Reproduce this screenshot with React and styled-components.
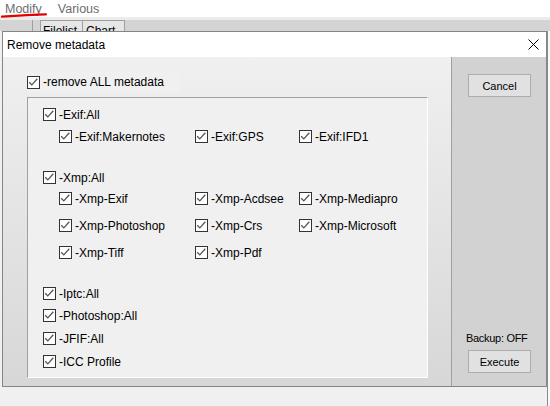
import React from "react";
import styled, { createGlobalStyle } from "styled-components";

const Global = createGlobalStyle`
  html, body { margin: 0; padding: 0; background: #ffffff; }
  body { font-family: "Liberation Sans", Arial, sans-serif; overflow: hidden; }
  * { box-sizing: border-box; }
`;

const Screen = styled.div`
  position: relative;
  width: 550px;
  height: 406px;
  overflow: hidden;
  display: flex;
  flex-direction: column;
  background: #ffffff;
`;

const MenuBar = styled.div`
  height: 17px;
  display: flex;
  align-items: flex-start;
  gap: 16px;
  padding: 2px 0 0 5px;
  background: #ffffff;
`;

const MenuItem = styled.span`
  position: relative;
  font-size: 12.5px;
  line-height: 15px;
  color: #6d6d6d;
`;

const Scribble = styled.svg`
  position: absolute;
  left: -4px;
  top: 10px;
  width: 46px;
  height: 7px;
  overflow: visible;
`;

const Toolbar = styled.div`
  height: 14px;
  display: flex;
  align-items: flex-start;
  padding-top: 3px;
  background: linear-gradient(#ececec 0 3px, #d4d4d4 3px);
`;

const ToolbarDivider = styled.div`
  width: 1px;
  height: 20px;
  margin-left: 32px;
  background: #a0a0a0;
`;

const TabStrip = styled.div`
  display: flex;
  margin-left: 7px;
`;

const Tab = styled.div`
  width: ${(p) => p.$w}px;
  height: 20px;
  padding: 3px 0 0 ${(p) => p.$pl}px;
  margin-left: ${(p) => (p.$first ? 0 : -1)}px;
  border: 1px solid #a0a0a0;
  border-bottom: none;
  background: #e6e6e6;
  font-size: 12px;
  line-height: 14px;
  color: #000;
`;

const Workspace = styled.div`
  flex: 1;
  display: flex;
  background: #fafafa;
`;

const WorkspacePane = styled.div`
  width: 548px;
  background: #f0f0f0;
  border-right: 1px solid #8a8a8a;
`;

const Dialog = styled.div`
  position: absolute;
  left: 2px;
  top: 31px;
  width: 545px;
  height: 356px;
  border: 1px solid #858585;
  display: flex;
  flex-direction: column;
  background: #ffffff;
`;

const TitleBar = styled.div`
  height: 25px;
  flex: none;
  display: flex;
  align-items: center;
  padding-left: 4px;
  background: #ffffff;
`;

const Title = styled.span`
  flex: 1;
  font-size: 12px;
  color: #000;
`;

const CloseButton = styled.div`
  width: 26px;
  height: 25px;
  display: flex;
  align-items: center;
  justify-content: center;
`;

const Body = styled.div`
  flex: 1;
  display: flex;
  min-height: 0;
`;

const MainArea = styled.div`
  flex: 1;
  display: flex;
  flex-direction: column;
  padding: 15px 23px 8px 24px;
  background: linear-gradient(#f0f0f0, #d7d7d7);
`;

const AllRow = styled.div`
  width: 153px;
  padding-top: 1px;
  background: #f0f0f0;
`;

const Group = styled.div`
  flex: 1;
  margin-top: 5px;
  padding: 8px 0 0 15px;
  background: #f0f0f0;
  border-top: 1px solid #a0a0a0;
  border-left: 1px solid #a0a0a0;
  border-right: 1px solid #ffffff;
  border-bottom: 1px solid #ffffff;
  display: flex;
  flex-direction: column;
  align-items: flex-start;
`;

const ItemWrap = styled.label`
  display: inline-flex;
  align-items: center;
  gap: 3px;
  height: 18px;
  margin-top: ${(p) => p.$mt || 0}px;
  font-size: 12px;
  color: #000;
  white-space: nowrap;
`;

const Box = styled.span`
  width: 13px;
  height: 13px;
  flex: none;
  border: 1px solid #333333;
  background: #ffffff;
  display: flex;
`;

const SubGrid = styled.div`
  display: grid;
  grid-template-columns: 136px 104px auto;
  row-gap: ${(p) => p.$rowGap || 0}px;
  margin-left: 16px;
  margin-top: ${(p) => p.$mt || 0}px;
`;

const SidePanel = styled.div`
  width: 95px;
  flex: none;
  display: flex;
  flex-direction: column;
  align-items: flex-start;
  padding: 17px 0 13px 16px;
  border-left: 1px solid #a0a0a0;
  background: #d2d2d2;
`;

const Button = styled.div`
  width: 63px;
  height: 23px;
  display: flex;
  align-items: center;
  justify-content: center;
  border: 1px solid #adadad;
  background: #e1e1e1;
  font-size: 11px;
  color: #000;
  margin-top: ${(p) => p.$mt || 0}px;
`;

const Spacer = styled.div`
  flex: 1;
`;

const BackupLabel = styled.div`
  margin-left: -2px;
  font-size: 11px;
  line-height: 14px;
  letter-spacing: -0.3px;
  color: #000;
`;

function Check({ children, mt }) {
  return (
    <ItemWrap $mt={mt}>
      <Box>
        <svg width="11" height="11" viewBox="0 0 11 11">
          <path d="M1.2 5.2 L3.8 7.9 L9.3 1.8" fill="none" stroke="#555" strokeWidth="1.3" />
        </svg>
      </Box>
      {children}
    </ItemWrap>
  );
}

export default function App() {
  return (
    <>
      <Global />
      <Screen>
        <MenuBar>
          <MenuItem>
            Modify
            <Scribble viewBox="0 0 46 7">
              <path d="M1 4.6 Q14 3.6 26 3.1 T45 2.4" fill="none" stroke="#e40000" strokeWidth="2.2" strokeLinecap="round" />
            </Scribble>
          </MenuItem>
          <MenuItem>Various</MenuItem>
        </MenuBar>
        <Toolbar>
          <ToolbarDivider />
          <TabStrip>
            <Tab $first $w={43} $pl={2}>Filelist</Tab>
            <Tab $w={43} $pl={3}>Chart</Tab>
          </TabStrip>
        </Toolbar>
        <Workspace>
          <WorkspacePane />
        </Workspace>

        <Dialog>
          <TitleBar>
            <Title>Remove metadata</Title>
            <CloseButton>
              <svg width="11" height="11" viewBox="0 0 11 11">
                <path d="M0.5 0.5 L10.5 10.5 M10.5 0.5 L0.5 10.5" stroke="#000" strokeWidth="1" />
              </svg>
            </CloseButton>
          </TitleBar>
          <Body>
            <MainArea>
              <AllRow>
                <Check>-remove ALL metadata</Check>
              </AllRow>
              <Group>
                <Check>-Exif:All</Check>
                <SubGrid $mt={4}>
                  <Check>-Exif:Makernotes</Check>
                  <Check>-Exif:GPS</Check>
                  <Check>-Exif:IFD1</Check>
                </SubGrid>
                <Check mt={23}>-Xmp:All</Check>
                <SubGrid $mt={3} $rowGap={9}>
                  <Check>-Xmp-Exif</Check>
                  <Check>-Xmp-Acdsee</Check>
                  <Check>-Xmp-Mediapro</Check>
                  <Check>-Xmp-Photoshop</Check>
                  <Check>-Xmp-Crs</Check>
                  <Check>-Xmp-Microsoft</Check>
                  <Check>-Xmp-Tiff</Check>
                  <Check>-Xmp-Pdf</Check>
                </SubGrid>
                <Check mt={23}>-Iptc:All</Check>
                <Check mt={4}>-Photoshop:All</Check>
                <Check mt={5}>-JFIF:All</Check>
                <Check mt={5}>-ICC Profile</Check>
              </Group>
            </MainArea>
            <SidePanel>
              <Button>Cancel</Button>
              <Spacer />
              <BackupLabel>Backup: OFF</BackupLabel>
              <Button $mt={5}>Execute</Button>
            </SidePanel>
          </Body>
        </Dialog>
      </Screen>
    </>
  );
}
